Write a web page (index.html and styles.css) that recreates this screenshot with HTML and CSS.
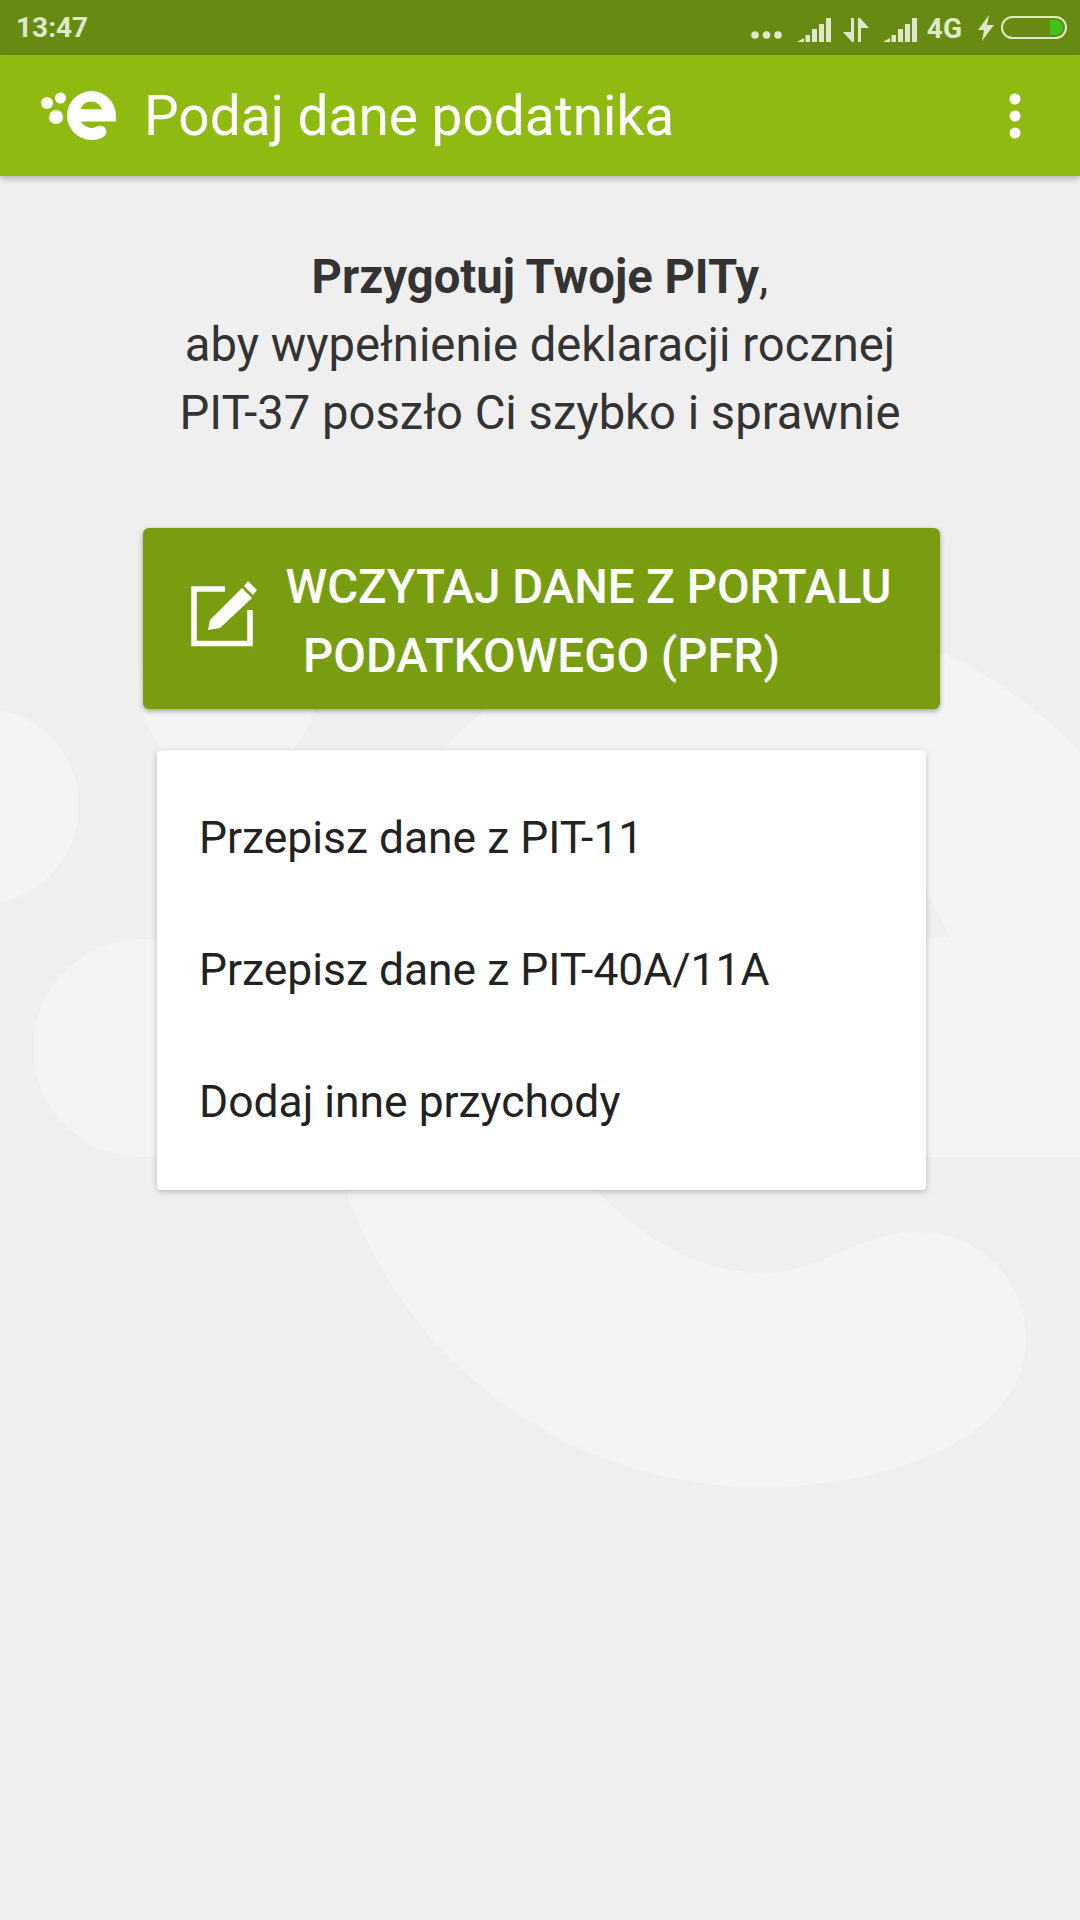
FILE: index.html
```html
<!DOCTYPE html>
<html lang="pl">
<head>
    <meta charset="UTF-8">
    <meta name="viewport" content="width=device-width, initial-scale=1.0">
    <title>Podaj dane podatnika</title>
    <link rel="stylesheet" href="styles.css">
</head>
<body>
    <svg width="0" height="0" class="defs">
        <symbol id="brand" viewBox="0 0 1200 1920" width="1200" height="1920">
            <path fill-rule="evenodd" d="M1197 1050V1157H575C590 1195 670 1273 763 1273C820 1273 860 1232 917 1232C985 1232 1026 1285 1026 1340C1026 1430 905 1487 760 1487A437 437 0 1 1 1197 1050ZM950 938C920 860 840 800 760 800C660 800 590 860 570 938Z"/>
        </symbol>
    </svg>

    <!-- watermark behind the content -->
    <svg class="watermark" viewBox="0 0 1080 1920">
        <circle cx="-19" cy="806" r="98"/>
        <circle cx="142" cy="1048" r="109"/>
        <circle cx="228" cy="690" r="88"/>
        <use href="#brand"/>
    </svg>

    <div class="status-bar">
        <span class="clock">13:47</span>
        <div class="status-icons">
            <svg class="ic-dots" width="31" height="10" viewBox="0 0 31 10">
                <circle cx="4" cy="5" r="3.8"/><circle cx="15.500" cy="5" r="3.8"/><circle cx="27" cy="5" r="3.8"/>
            </svg>
            <svg class="ic-signal" width="34" height="24" viewBox="0 0 34 24">
                <path d="M0 24L7 20V24ZM8.500 17H13V24H8.500ZM15 11H20V24H15ZM22 6H27V24H22ZM29 0H34V24H29Z"/>
            </svg>
            <svg class="ic-data" width="26" height="24" viewBox="0 0 26 24">
                <path d="M8 0H11V24H9L0 14H8ZM15 0H17L26 10H18V24H15Z"/>
            </svg>
            <svg class="ic-signal" width="34" height="24" viewBox="0 0 34 24">
                <path d="M0 24L7 20V24ZM8.500 17H13V24H8.500ZM15 11H20V24H15ZM22 6H27V24H22ZM29 0H34V24H29Z"/>
            </svg>
            <span class="network">4G</span>
            <svg class="ic-bolt" width="16" height="26" viewBox="0 0 16 26">
                <path d="M11 0L0 15H6L4 26L16 10H9Z"/>
            </svg>
            <div class="battery"><div class="battery-fill"></div></div>
        </div>
    </div>

    <header class="app-bar">
        <svg class="logo" width="78" height="52" viewBox="40 89 78 52">
            <circle cx="47" cy="102" r="6"/>
            <circle cx="60.500" cy="97" r="5.500"/>
            <circle cx="56" cy="116" r="7"/>
            <use href="#brand" transform="translate(48.900 55.700) scale(0.056)"/>
        </svg>
        <h1 class="app-title">Podaj dane podatnika</h1>
        <svg class="menu" width="12" height="46" viewBox="0 0 12 46">
            <circle cx="6" cy="6" r="5.500"/><circle cx="6" cy="23" r="5.500"/><circle cx="6" cy="40" r="5.500"/>
        </svg>
    </header>

    <main class="content">
        <p class="intro"><strong>Przygotuj Twoje PITy</strong>,<br>aby wypełnienie deklaracji rocznej<br>PIT-37 poszło Ci szybko i sprawnie</p>

        <button class="import-button">
            <svg class="edit-icon" width="67" height="66" viewBox="11 13 67 66">
                <path class="edit-box" d="M45 21H14V75.500H70V42"/>
                <path d="M28 62L30 52L62 20L72 30L40 60ZM64 18L68 13L77 22L73 27Z"/>
            </svg>WCZYTAJ DANE Z PORTALU<br>PODATKOWEGO (PFR)
        </button>

        <div class="menu-card">
            <div class="menu-item">Przepisz dane z PIT-11</div>
            <div class="menu-item">Przepisz dane z PIT-40A/11A</div>
            <div class="menu-item">Dodaj inne przychody</div>
        </div>
    </main>
</body>
</html>
```

FILE: styles.css
```css
body {
    font-family: Roboto, "Liberation Sans", sans-serif;
    margin: 0;
    width: 1080px;
    height: 1920px;
    overflow: hidden;
    position: relative;
    background-color: #efefef;
}

.defs {
    position: absolute;
}

.watermark {
    position: absolute;
    left: 0;
    top: 0;
    width: 1080px;
    height: 1920px;
    fill: #f4f4f4;
}

/* status bar */
.status-bar {
    position: relative;
    height: 55px;
    display: flex;
    align-items: center;
    justify-content: space-between;
    padding: 0 13px 0 16px;
    background-color: #678b12;
    color: #dfe8cb;
}
.clock {
    font-size: 28px;
    font-weight: 700;
}
.status-icons {
    display: flex;
    align-items: center;
    fill: #dfe8cb;
}
.ic-dots {
    margin: 15px 0 0 0;
}
.ic-signal {
    margin-left: 15px;
    margin-top: 4px;
}
.ic-data {
    margin-left: 12px;
    margin-top: 4px;
}
.ic-data + .ic-signal {
    margin-left: 14px;
}
.network {
    margin-left: 10px;
    padding-top: 2px;
    font-size: 28px;
    font-weight: 700;
}
.ic-bolt {
    margin-left: 16px;
}
.battery {
    width: 66px;
    height: 23px;
    margin-left: 7px;
    box-sizing: border-box;
    border: 2px solid #dfe8cb;
    border-radius: 12px;
    display: flex;
    justify-content: flex-end;
    padding: 2px;
}
.battery-fill {
    width: 13px;
    background-color: #3fc21a;
    border-radius: 0 8px 8px 0;
}

/* app bar */
.app-bar {
    position: relative;
    height: 121px;
    display: flex;
    align-items: center;
    padding: 0 59px 0 40px;
    background-color: #8eba12;
    box-shadow: 0 3px 6px rgba(0,0,0,0.25);
    fill: white;
}
.logo {
    flex: none;
}
.app-title {
    flex: 1;
    margin: 0 0 0 26px;
    font-size: 55px;
    font-weight: 400;
    color: white;
}

/* content */
.content {
    position: relative;
    padding-top: 67px;
}
.intro {
    margin: 0 0 81px 0;
    text-align: center;
    font-size: 47.200px;
    line-height: 68px;
    color: #333333;
}
.intro strong {
    font-weight: 700;
}
.import-button {
    display: block;
    box-sizing: border-box;
    width: 797px;
    height: 181px;
    margin: 0 0 0 143px;
    padding: 6px 0 0 0;
    border: none;
    border-radius: 6px;
    background-color: #789d10;
    box-shadow: 0 2px 5px rgba(0,0,0,0.35);
    color: white;
    font-family: inherit;
    font-size: 47.400px;
    font-weight: 500;
    line-height: 66px;
    text-align: center;
}
.edit-icon {
    fill: white;
    margin-right: 27px;
    margin-bottom: -24px;
    vertical-align: -20px;
}
.edit-box {
    fill: none;
    stroke: white;
    stroke-width: 5.500;
}
.menu-card {
    box-sizing: border-box;
    width: 769px;
    height: 440px;
    margin: 41px 0 0 157px;
    padding: 22px 0;
    background: white;
    border-radius: 4px;
    box-shadow: 0 2px 6px rgba(0,0,0,0.22);
}
.menu-item {
    height: 132px;
    display: flex;
    align-items: center;
    padding-left: 42px;
    font-size: 44.400px;
    color: #222222;
}
```
